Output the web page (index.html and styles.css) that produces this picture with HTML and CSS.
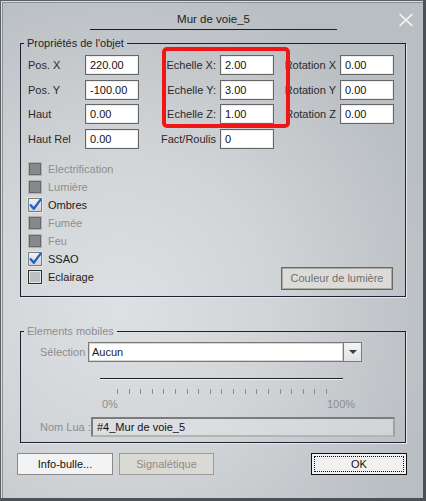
FILE: index.html
```html
<!DOCTYPE html>
<html lang="fr">
<head>
<meta charset="utf-8">
<title>Mur de voie_5</title>
<link rel="stylesheet" href="styles.css">
</head>
<body>
<div class="window">
  <div class="titlebar">
    <div class="title">Mur de voie_5</div>
    <span class="close" aria-label="Fermer">
      <svg width="16" height="14" viewBox="0 0 16 14"><path d="M1.5 1 L14.5 13 M14.5 1 L1.5 13" stroke="#f2f3f4" stroke-width="2" fill="none"/></svg>
    </span>
  </div>

  <fieldset class="group group-props">
    <legend>Propriétés de l'objet</legend>
    <div class="group-body props-body">
      <div class="props-grid">
        <span class="lbl">Pos. X</span><input class="field" value="220.00">
        <span class="lbl lbl-r">Echelle X:</span><input class="field" value="2.00">
        <span class="lbl lbl-r">Rotation X</span><input class="field" value="0.00">

        <span class="lbl">Pos. Y</span><input class="field" value="-100.00">
        <span class="lbl lbl-r">Echelle Y:</span><input class="field" value="3.00">
        <span class="lbl lbl-r">Rotation Y</span><input class="field" value="0.00">

        <span class="lbl">Haut</span><input class="field" value="0.00">
        <span class="lbl lbl-r">Echelle Z:</span><input class="field" value="1.00">
        <span class="lbl lbl-r">Rotation Z</span><input class="field" value="0.00">

        <span class="lbl">Haut Rel</span><input class="field" value="0.00">
        <span class="lbl lbl-r">Fact/Roulis</span><input class="field" value="0">
      </div>

      <div class="props-bottom">
        <ul class="checks">
          <li class="check disabled"><span class="cb cb-disabled"></span>Electrification</li>
          <li class="check disabled"><span class="cb cb-disabled"></span>Lumière</li>
          <li class="check"><span class="cb cb-checked"><svg width="14" height="14" viewBox="0 0 14 14"><path d="M2.8 7.2 L5.8 10.8 L12.6 1.6" stroke="#1d62c9" stroke-width="2.3" fill="none" stroke-linecap="round" stroke-linejoin="round"/></svg></span>Ombres</li>
          <li class="check disabled"><span class="cb cb-disabled"></span>Fumée</li>
          <li class="check disabled"><span class="cb cb-disabled"></span>Feu</li>
          <li class="check"><span class="cb cb-checked"><svg width="14" height="14" viewBox="0 0 14 14"><path d="M2.8 7.2 L5.8 10.8 L12.6 1.6" stroke="#1d62c9" stroke-width="2.3" fill="none" stroke-linecap="round" stroke-linejoin="round"/></svg></span>SSAO</li>
          <li class="check"><span class="cb cb-off"></span>Eclairage</li>
        </ul>
        <button class="btn btn-color" type="button">Couleur de lumière</button>
      </div>
    </div>
  </fieldset>

  <fieldset class="group group-mobile">
    <legend class="legend-disabled">Elements mobiles</legend>
    <div class="group-body mobile-body">
      <div class="select-row">
        <span class="lbl lbl-disabled">Sélection</span>
        <div class="combo">
          <div class="combo-field">Aucun</div>
          <div class="combo-btn"><svg width="8" height="4" viewBox="0 0 8 4"><path d="M0 0 H8 L4 4 Z" fill="#3a3a3a"/></svg></div>
        </div>
      </div>
      <div class="slider">
        <div class="track"></div>
        <div class="ticks">
          <i></i><i></i><i></i><i></i><i></i><i></i><i></i><i></i><i></i><i></i>
          <i></i><i></i><i></i><i></i><i></i><i></i><i></i><i></i><i></i>
        </div>
        <div class="scale"><span>0%</span><span>100%</span></div>
      </div>
      <div class="lua-row">
        <span class="lbl lbl-disabled">Nom Lua :</span>
        <div class="lua-field">#4_Mur de voie_5</div>
      </div>
    </div>
  </fieldset>

  <div class="actions">
    <button class="btn btn-plain" type="button">Info-bulle...</button>
    <button class="btn btn-off" type="button">Signalétique</button>
    <button class="btn btn-ok" type="button">OK</button>
  </div>

  <div class="annotation"></div>
</div>
</body>
</html>
```

FILE: styles.css
```css
html, body {
  margin: 0;
  padding: 0;
  background: #c4c8cb;
}

.window {
  position: relative;
  width: 426px;
  height: 501px;
  box-sizing: border-box;
  border: 1px solid #5c6165;
  border-right: 3px solid #4b5155;
  border-bottom: 3px solid #4b5155;
  background: radial-gradient(ellipse 78% 68% at 28% 62%, #dee1e3 0%, #d2d5d8 45%, #b9bec2 100%);
  box-shadow: inset 1px 1px 0 #d9dcde, inset 2px 2px 0 #8c9195;
  font-family: "Liberation Sans", Arial, sans-serif;
  font-size: 11px;
  color: #262626;
  overflow: hidden;
}

/* Title bar */
.titlebar {
  display: grid;
  grid-template-columns: 89px 247px 1fr;
  height: 36px;
}
.title {
  grid-column: 2;
  align-self: start;
  padding: 11px 0 3px;
  line-height: 14px;
  font-size: 11.5px;
  text-align: center;
  color: #222;
  border-bottom: 1px solid #1f1f1f;
}
.close {
  grid-column: 3;
  justify-self: end;
  align-self: start;
  margin: 12px 9px 0 0;
  width: 16px;
  height: 14px;
  display: block;
}
.close svg {
  display: block;
  filter: drop-shadow(0 0 0.5px rgba(80, 85, 90, 0.6));
}

/* Group boxes */
.group {
  margin: 0 17px 0 19px;
  padding: 0;
  border: 1px solid #1e2230;
  box-shadow: 1px 1px 0 #e6e8ea;
  min-inline-size: 0;
}
.group-mobile {
  margin-top: 28px;
}
.group legend {
  margin-left: 3px;
  padding: 0 3px;
  line-height: 13px;
  color: #1f1f1f;
}
.group legend.legend-disabled {
  color: #8c8e90;
}

.props-body {
  padding: 5px 12px 6px 7px;
}

.props-grid {
  display: grid;
  grid-template-columns: 57px 54px 81px 54px 66px 54px;
  grid-auto-rows: 20px;
  row-gap: 4.67px;
  align-items: center;
}
.lbl {
  white-space: nowrap;
  color: #2a2a2a;
}
.lbl-r {
  text-align: right;
  padding-right: 4px;
}
.lbl-disabled {
  color: #8a8c8e;
}

.field {
  width: 54px;
  height: 20px;
  box-sizing: border-box;
  margin: 0;
  padding: 0 0 0 4px;
  border: 1px solid #666;
  box-shadow: inset 0 0 0 1px #ececec;
  background: #fff;
  font-family: "Liberation Sans", Arial, sans-serif;
  font-size: 11px;
  color: #111;
  outline: none;
}

.props-bottom {
  margin-top: 11px;
  display: flex;
  align-items: flex-end;
}
.checks {
  list-style: none;
  margin: 0;
  padding: 0 0 4px;
}
.check {
  height: 18px;
  display: flex;
  align-items: center;
  gap: 6px;
  color: #202020;
}
.check.disabled {
  color: #8d8f91;
}
.cb {
  width: 14px;
  height: 14px;
  box-sizing: border-box;
  flex: none;
  position: relative;
}
.cb-disabled {
  border: 1px solid #b0b2b4;
  background: #888;
  box-shadow: inset 0 0 0 1px #666;
}
.cb-checked {
  border: 1px solid #7d7d7d;
  background: linear-gradient(#f2f2f2, #d2d2d2);
  box-shadow: 0 0 0 1px #e4e4e4;
}
.cb-checked svg {
  position: absolute;
  left: -1px;
  top: -1px;
}
.cb-off {
  border: 1px solid #2c2c2c;
  background: #bfc0c1;
  box-shadow: 0 0 0 1px #e2e4e5, inset 0 0 0 1px #e6e6e6;
}

.btn {
  box-sizing: border-box;
  margin: 0;
  padding: 0;
  font-family: "Liberation Sans", Arial, sans-serif;
  font-size: 11px;
  cursor: default;
}
.btn-color {
  margin-left: auto;
  width: 112px;
  height: 23px;
  border: 1px solid #676767;
  box-shadow: inset 0 0 0 1px #a9a9a5;
  background: #dcdbd7;
  color: #707070;
}

/* Elements mobiles */
.mobile-body {
  padding: 4px 10px 5px 19px;
}
.select-row {
  display: grid;
  grid-template-columns: 48px 274px;
  height: 20px;
  align-items: center;
}
.combo {
  display: flex;
  height: 20px;
}
.combo-field {
  flex: 1;
  box-sizing: border-box;
  border: 1px solid #7a7a7a;
  box-shadow: inset 0 0 0 1px #d6d6d6;
  background: #fff;
  padding-left: 3px;
  line-height: 18px;
  color: #1a1a1a;
}
.combo-btn {
  width: 18px;
  box-sizing: border-box;
  border: 1px solid #7a7a7a;
  border-left: none;
  background: linear-gradient(#f4f4f4, #e2e2e2);
  display: flex;
  align-items: center;
  justify-content: center;
}
.combo-btn svg {
  display: block;
}

.slider {
  margin-left: 60px;
  width: 243px;
  padding-top: 16px;
}
.track {
  height: 1px;
  background: #202020;
  box-shadow: 0 1px 0 #eef0f1;
}
.ticks {
  margin: 10px 0 0 17px;
  width: 210px;
  height: 5px;
  display: flex;
  justify-content: space-between;
}
.ticks i {
  width: 1px;
  height: 5px;
  background: #8a8c8e;
}
.scale {
  margin: 4px 0 0 2px;
  display: grid;
  grid-template-columns: 225px auto;
  line-height: 13px;
  color: #8c8e90;
  white-space: nowrap;
}

.lua-row {
  margin-top: 6px;
  display: grid;
  grid-template-columns: 51px 304px;
  height: 20px;
  align-items: center;
}
.lua-field {
  height: 20px;
  box-sizing: border-box;
  border: 2px solid;
  border-color: #7c7c7c #a2a2a2 #b4b4b4 #7c7c7c;
  background: rgba(226, 228, 230, 0.55);
  padding-left: 4px;
  line-height: 16px;
  color: #111;
}

/* Bottom buttons */
.actions {
  margin: 10px 16px 0 16px;
  display: flex;
  gap: 6px;
}
.actions .btn {
  height: 22px;
}
.btn-plain {
  width: 96px;
  border: 1px solid #8a8a8a;
  background: #f3f3f3;
  color: #111;
}
.btn-off {
  width: 95px;
  border: 1px solid #9c9c9c;
  background: #dbd9d3;
  color: #8d8d8d;
}
.btn-ok {
  margin-left: auto;
  width: 96px;
  border: 1px solid #111;
  background: #f1f1f1;
  color: #111;
  outline: 1px dotted #111;
  outline-offset: -4px;
}

/* Red annotation frame drawn over the scale fields */
.annotation {
  position: absolute;
  left: 161px;
  top: 46px;
  width: 128px;
  height: 81px;
  box-sizing: border-box;
  border: 4px solid #f01616;
  border-radius: 5px;
  pointer-events: none;
}
```
